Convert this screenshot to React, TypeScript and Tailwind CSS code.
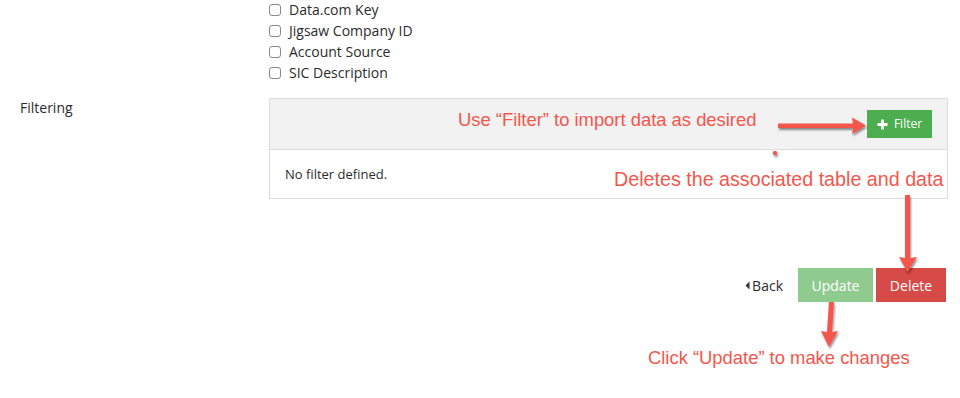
import React from "react";

const RED = "#f4564c";

function Check({ label }: { label: string }) {
  return (
    <div className="flex items-center h-[21px]">
      <span className="w-[12px] h-[12px] rounded-[3px] border border-[#8a8a8a] bg-white" />
      <span className="ml-[8px] text-[14px] text-[#2b2b2b]">{label}</span>
    </div>
  );
}

export default function App() {
  return (
    <div
      className="relative w-[960px] h-[398px] bg-white overflow-hidden"
      style={{ fontFamily: '"Open Sans", "Liberation Sans", sans-serif' }}
    >
      <div className="-mt-[1px] pl-[269px] flex flex-col">
        <Check label="Data.com Key" />
        <Check label="Jigsaw Company ID" />
        <Check label="Account Source" />
        <Check label="SIC Description" />
      </div>

      <div className="mt-[15px] flex">
        <div className="w-[269px] pl-[20px] text-[14px] leading-[20px] text-[#2b2b2b]">Filtering</div>
        <div className="w-[679px] border border-[#dcdcdc]">
          <div className="flex justify-end px-[15px] py-[11px] bg-[#f2f2f2] border-b border-[#dcdcdc]">
            <button className="h-[28px] w-[65px] flex items-center justify-center gap-[6px] bg-[#4cae4f] text-white text-[12px]">
              <svg width="11" height="11" viewBox="0 0 11 11">
                <path d="M5.5 0.5v10M0.5 5.5h10" stroke="white" strokeWidth="2.8" />
              </svg>
              Filter
            </button>
          </div>
          <div className="px-[15px] py-[15px] text-[13px] leading-[18px] text-[#2b2b2b]">No filter defined.</div>
        </div>
      </div>

      <div className="mt-[69px] flex justify-end items-center pr-[14px]">
        <div className="flex items-center text-[14px] text-[#2b2b2b] mr-[15px]">
          <svg width="5" height="9" viewBox="0 0 5 9" className="mr-[2px]">
            <path d="M4.5 0.5L0.5 4.5L4.5 8.5Z" fill="#333" />
          </svg>
          Back
        </div>
        <button className="h-[34px] w-[75px] bg-[#8fcb8f] text-white text-[14px]">Update</button>
        <button className="ml-[3px] h-[34px] w-[70px] bg-[#d64a47] text-white text-[14px]">Delete</button>
      </div>

      {/* annotations */}
      <div
        className="absolute left-[458px] top-[110px] text-[18.4px] leading-[20px] whitespace-nowrap"
        style={{ color: RED, fontFamily: '"Liberation Sans", Arial, sans-serif' }}
      >
        Use “Filter” to import data as desired
      </div>
      <div
        className="absolute left-[614px] top-[169px] text-[19.7px] leading-[20px] whitespace-nowrap"
        style={{ color: RED, fontFamily: '"Liberation Sans", Arial, sans-serif' }}
      >
        Deletes the associated table and data
      </div>
      <div
        className="absolute left-[648px] top-[348px] text-[18.4px] leading-[20px] whitespace-nowrap"
        style={{ color: RED, fontFamily: '"Liberation Sans", Arial, sans-serif' }}
      >
        Click “Update” to make changes
      </div>

      <svg className="absolute left-0 top-0 pointer-events-none" width="960" height="398">
        <defs>
          <filter id="sh" x="-20%" y="-20%" width="140%" height="160%">
            <feDropShadow dx="1" dy="2" stdDeviation="1.2" floodColor="#000" floodOpacity="0.45" />
          </filter>
        </defs>
        <g filter="url(#sh)" fill={RED}>
          <path d="M778 123.5 L853 123.5 L852 117.5 L866 125.5 L852 134 L853 128 L778 128 Z" />
          <path d="M905 195 L910 195 L910 258 L917 257 L907.5 272 L899 257 L905 258 Z" />
          <path d="M829 302 L834 302 L832 332 L838 331 L829 347 L821 331 L827 332 Z" />
          <circle cx="775" cy="153" r="2.2" />
        </g>
      </svg>
    </div>
  );
}
